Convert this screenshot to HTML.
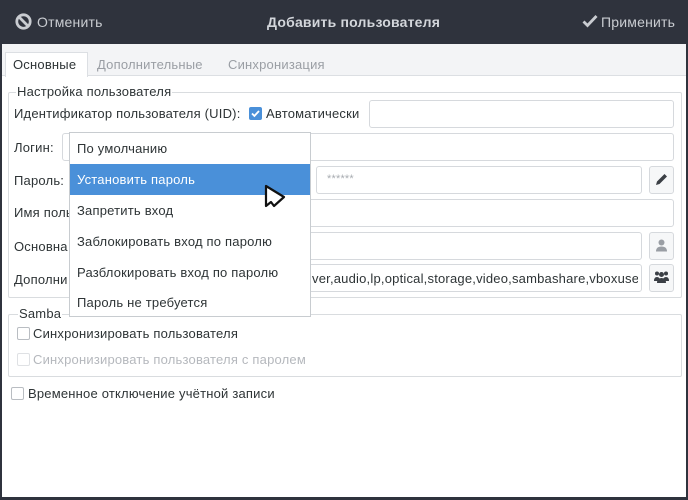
<!DOCTYPE html>
<html><head><meta charset="utf-8"><style>
*{box-sizing:border-box;margin:0;padding:0}
body{width:688px;height:500px;background:#2f333d;font-family:"Liberation Sans","DejaVu Sans",sans-serif;font-size:13px;letter-spacing:0.2px;color:#2e3436;position:relative;overflow:hidden}
.abs{position:absolute}
.hdr{left:0;top:0;width:688px;height:44px;background:#2f333d;color:#d3d6db}
.body{left:2px;top:44px;width:684px;height:453px;background:#fff}
.tabbar{left:2px;top:44px;width:684px;height:32px;background:#f3f4f6;border-bottom:1px solid #dcdfe3}
.tab{top:53px;height:24px;line-height:24px;font-size:13px}
.inp{background:#fff;border:1px solid #d6d9dd;border-radius:3px}
.btn{background:#f6f7f8;border:1px solid #d6d9dd;border-radius:3px}
.grp{border:1px solid #d9dcdf;border-radius:2px}
.lg{background:#fff;padding:0 1px;color:#2e3436}
.cb{width:13px;height:13px;border:1px solid #b9bdc2;border-radius:2px;background:#fff}
.dd{left:69px;top:132px;width:242px;height:185px;background:#fff;border:1px solid #c8ccd0}
.it{position:absolute;left:0;width:240px;height:31px;line-height:31px;padding-left:7px}
</style></head><body>
<div class="abs hdr"></div>
<svg class="abs" style="left:15px;top:13px" width="17" height="17" viewBox="0 0 16 16"><circle cx="8" cy="8" r="6.3" fill="none" stroke="#c9ccd1" stroke-width="2.6"/><line x1="3.8" y1="3.8" x2="12.2" y2="12.2" stroke="#c9ccd1" stroke-width="2.6"/></svg>
<div class="abs" style="left:37px;top:14px;color:#c9ccd1;font-size:14px">Отменить</div>
<div class="abs" style="left:267px;top:14px;color:#d3d6db;font-size:14px;font-weight:bold">Добавить пользователя</div>
<svg class="abs" style="left:582px;top:14px" width="16" height="14" viewBox="0 0 16 14"><path d="M1.5 7.5l4 4L14.5 2" fill="none" stroke="#c9ccd1" stroke-width="2.8"/></svg>
<div class="abs" style="left:601px;top:14px;color:#c9ccd1;font-size:14px">Применить</div>
<div class="abs body"></div>
<div class="abs tabbar"></div>
<div class="abs" style="left:5px;top:52px;width:83px;height:25px;background:#fff;border:1px solid #dcdfe3;border-bottom:none"></div>
<div class="abs tab" style="left:13px">Основные</div>
<div class="abs tab" style="left:97px;color:#9a9ea4">Дополнительные</div>
<div class="abs tab" style="left:228px;color:#9a9ea4">Синхронизация</div>

<div class="abs grp" style="left:8px;top:92px;width:674px;height:206px"></div>
<div class="abs lg" style="left:16px;top:84px">Настройка пользователя</div>
<div class="abs" style="left:14px;top:106px">Идентификатор пользователя (UID):</div>
<div class="abs" style="left:249px;top:107px;width:13px;height:13px;background:#4a90d9;border-radius:2px"></div>
<svg class="abs" style="left:250px;top:108px" width="11" height="11" viewBox="0 0 11 11"><path d="M2 5.5l2.4 2.4L9 3" fill="none" stroke="#fff" stroke-width="1.8"/></svg>
<div class="abs" style="left:266px;top:106px">Автоматически</div>
<div class="abs inp" style="left:369px;top:100px;width:305px;height:28px"></div>
<div class="abs" style="left:14px;top:140px">Логин:</div>
<div class="abs inp" style="left:62px;top:133px;width:612px;height:28px"></div>
<div class="abs" style="left:14px;top:173px">Пароль:</div>
<div class="abs inp" style="left:316px;top:166px;width:326px;height:28px"></div>
<div class="abs" style="left:327px;top:173px;color:#a9adb2;font-size:11px">******</div>
<div class="abs btn" style="left:649px;top:166px;width:25px;height:28px"></div>
<svg class="abs" style="left:654px;top:172px" width="15" height="15" viewBox="0 0 15 15"><path d="M2 13l1-3.5 7.5-7.5 2.5 2.5L5.5 12z" fill="#3b3f45"/></svg>
<div class="abs" style="left:14px;top:205px">Имя поль</div>
<div class="abs inp" style="left:290px;top:199px;width:384px;height:28px"></div>
<div class="abs" style="left:14px;top:239px">Основна</div>
<div class="abs inp" style="left:290px;top:232px;width:352px;height:28px"></div>
<div class="abs btn" style="left:649px;top:232px;width:25px;height:28px"></div>
<svg class="abs" style="left:654px;top:238px" width="15" height="15" viewBox="0 0 15 15"><circle cx="7.5" cy="4.5" r="3" fill="#9a9ea4"/><path d="M2 13.5q0-5 5.5-5t5.5 5z" fill="#9a9ea4"/></svg>
<div class="abs" style="left:14px;top:272px">Дополни</div>
<div class="abs inp" style="left:290px;top:264px;width:352px;height:28px;overflow:hidden"></div>
<div class="abs" style="left:312px;top:271px;white-space:nowrap;width:326px;overflow:hidden">ver,audio,lp,optical,storage,video,sambashare,vboxuser</div>
<div class="abs btn" style="left:649px;top:264px;width:25px;height:28px"></div>
<svg class="abs" style="left:653px;top:270px" width="17" height="15" viewBox="0 0 17 15"><circle cx="4" cy="3.5" r="2" fill="#3b3f45"/><circle cx="13" cy="3.5" r="2" fill="#3b3f45"/><circle cx="8.5" cy="4.5" r="2.5" fill="#3b3f45"/><path d="M1 11q0-4 3-4t3 4zM10 11q0-4 3-4t3 4zM4 13q0-5 4.5-5t4.5 5z" fill="#3b3f45"/></svg>

<div class="abs grp" style="left:8px;top:314px;width:674px;height:63px"></div>
<div class="abs lg" style="left:18px;top:306px">Samba</div>
<div class="abs cb" style="left:17px;top:327px"></div>
<div class="abs" style="left:33px;top:326px">Синхронизировать пользователя</div>
<div class="abs cb" style="left:17px;top:353px;border-color:#dfe1e4"></div>
<div class="abs" style="left:33px;top:352px;color:#b5b8bd">Синхронизировать пользователя с паролем</div>
<div class="abs cb" style="left:11px;top:387px"></div>
<div class="abs" style="left:28px;top:386px">Временное отключение учётной записи</div>

<div class="abs dd">
<div class="it" style="top:0">По умолчанию</div>
<div class="it" style="top:31px;background:#4a90d9;color:#fff">Установить пароль</div>
<div class="it" style="top:62px">Запретить вход</div>
<div class="it" style="top:93px">Заблокировать вход по паролю</div>
<div class="it" style="top:124px">Разблокировать вход по паролю</div>
<div class="it" style="top:154px">Пароль не требуется</div>
</div>
<svg class="abs" style="left:263px;top:184px" width="24" height="28" viewBox="0 0 24 28"><path d="M3 2v20l5-4 3 4 10-9z" fill="#fff" stroke="#111" stroke-width="2.2" stroke-linejoin="round"/></svg>
</body></html>
